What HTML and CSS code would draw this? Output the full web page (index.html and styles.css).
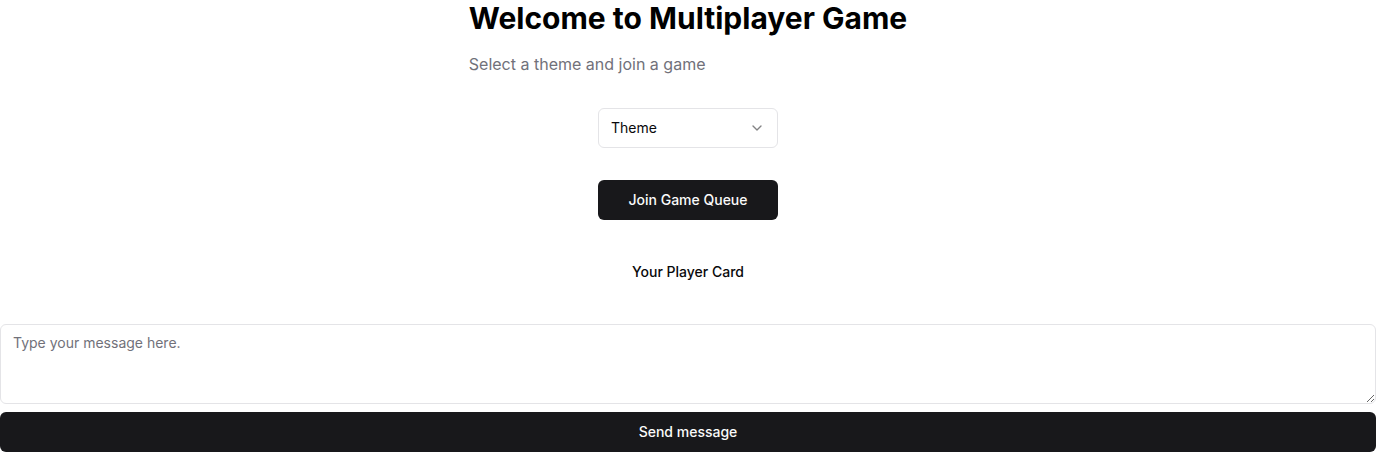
FILE: index.html
```html
<!DOCTYPE html>
<html lang="en">
<head>
<meta charset="utf-8">
<title>Multiplayer Game</title>
<link rel="stylesheet" href="styles.css">
</head>
<body>
<main class="page">
  <section class="lobby">
    <header class="intro">
      <h1 class="title">Welcome to Multiplayer Game</h1>
      <p class="subtitle">Select a theme and join a game</p>
    </header>
    <button class="select" type="button">
      <span>Theme</span>
      <svg class="chev" width="16" height="16" viewBox="0 0 24 24" fill="none" stroke="currentColor" stroke-width="2" stroke-linecap="round" stroke-linejoin="round"><path d="m6 9 6 6 6-6"/></svg>
    </button>
    <button class="btn join" type="button">Join Game Queue</button>
    <div class="card-label">Your Player Card</div>
  </section>
  <section class="chat">
    <textarea class="message" placeholder="Type your message here."></textarea>
    <button class="btn send" type="button">Send message</button>
  </section>
</main>
</body>
</html>
```
FILE: styles.css
```css
* { box-sizing: border-box; }
html, body { margin: 0; padding: 0; background: #fff; }
body {
  font-family: Inter, "Noto Sans", sans-serif;
  color: #09090b;
  width: 1376px;
  height: 452px;
  overflow: hidden;
}
.page { display: flex; flex-direction: column; }
.lobby {
  display: flex;
  flex-direction: column;
  align-items: center;
}
.intro { display: flex; flex-direction: column; }
.title {
  margin: 0;
  font-size: 30px;
  line-height: 36px;
  font-weight: 700;
  color: #000;
}
.subtitle {
  margin: 16px 0 0;
  font-size: 16px;
  line-height: 24px;
  color: #71717a;
}
.select {
  margin-top: 32px;
  width: 180px;
  height: 40px;
  display: flex;
  align-items: center;
  justify-content: space-between;
  padding: 0 12px 1px 12px;
  border: 1px solid #e4e4e7;
  border-radius: 6px;
  background: #fff;
  font-family: inherit;
  font-size: 14px;
  line-height: 20px;
  color: #09090b;
}
.chev { opacity: 0.5; }
.btn {
  border: 0;
  border-radius: 6px;
  background: #18181b;
  color: #fafafa;
  font-family: inherit;
  font-size: 14px;
  line-height: 20px;
  font-weight: 500;
  height: 40px;
  padding: 0 16px 1px;
}
.join { margin-top: 32px; width: 180px; }
.card-label {
  margin-top: 42px;
  font-size: 14px;
  line-height: 20px;
  font-weight: 500;
  color: #09090b;
}
.chat {
  margin-top: 42px;
  display: flex;
  flex-direction: column;
  gap: 8px;
}
.message {
  display: block;
  width: 100%;
  height: 80px;
  padding: 8px 12px;
  border: 1px solid #e4e4e7;
  border-radius: 6px;
  font-family: inherit;
  font-size: 14px;
  line-height: 20px;
  color: #09090b;
  resize: vertical;
}
.message::placeholder { color: #71717a; }
.send { width: 100%; }
```
